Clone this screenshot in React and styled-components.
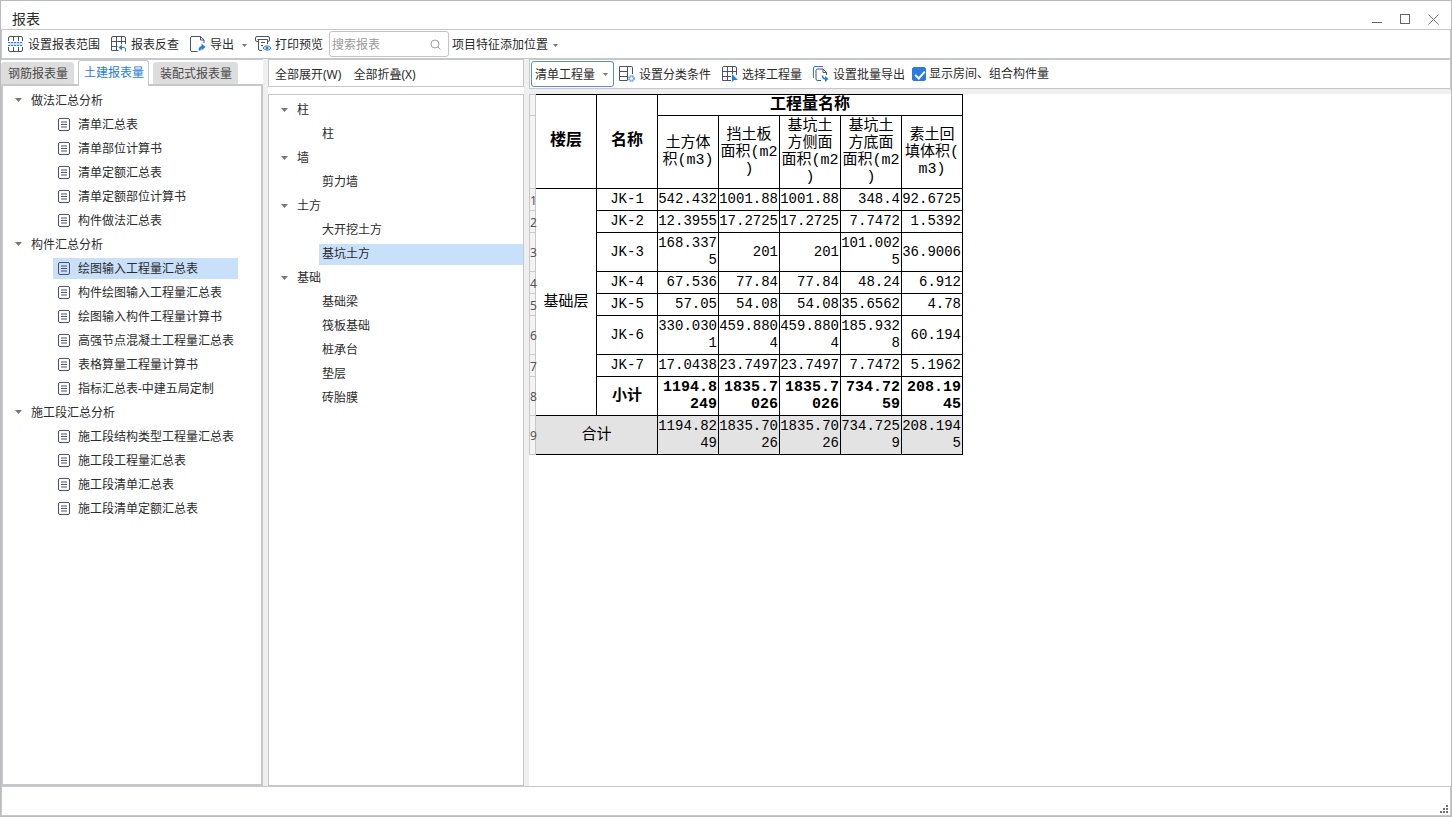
import React from "react";
import styled, { createGlobalStyle, css } from "styled-components";

const line = "#c5c7cb";
const ink = "#2b2b2b";
const ui = '"Noto Sans", "Noto Sans CJK SC", sans-serif';
const mono = '"Liberation Mono", "Noto Sans CJK SC", monospace';

const GlobalStyle = createGlobalStyle`
  * { box-sizing: border-box; }
  body { margin: 0; background: #fff; color: ${ink}; font: 12px/18px ${ui}; }
  button, input, select { font: inherit; color: inherit; margin: 0; }
  ul { list-style: none; margin: 0; padding: 0; }
  svg { display: block; flex: none; }
`;

const Window = styled.div`
  display: flex;
  flex-direction: column;
  min-height: 100vh;
  border: 1px solid #bbbbbb;
`;

const TitleBar = styled.header`
  display: flex;
  align-items: center;
  justify-content: space-between;
  height: 28px;
  padding: 8px 4px 0 11px;
`;

const Title = styled.h1`
  margin: 0;
  font-size: 14px;
  font-weight: 400;
  line-height: 20px;
`;

const Controls = styled.div`
  display: flex;
`;

const ControlButton = styled.button`
  display: flex;
  align-items: center;
  justify-content: center;
  width: 28px;
  height: 20px;
  padding: 0;
  border: 0;
  background: none;
`;

const Toolbar = styled.div`
  display: flex;
  align-items: center;
  height: 30px;
  padding: ${(p) => p.$pad || "0"};
  border: 1px solid ${line};
  background: #fff;
`;

const ToolButton = styled.button`
  display: flex;
  align-items: center;
  gap: 4px;
  height: 24px;
  padding: 0;
  margin-right: ${(p) => p.$after || 11}px;
  border: 0;
  background: none;
  white-space: nowrap;
`;

const Caption = styled.span`
  padding-top: 2px;
`;

const CaretSlot = styled.span`
  display: flex;
  margin-left: ${(p) => p.$gap || 0}px;
  padding-top: 2px;
`;

const SearchBox = styled.label`
  display: flex;
  align-items: center;
  width: 120px;
  height: 26px;
  margin-right: 3px;
  padding: 0 7px 0 2px;
  border: 1px solid #c4c4c4;
  border-radius: 3px;
`;

const SearchInput = styled.input`
  flex: 1;
  min-width: 0;
  padding: 1px 0 0;
  border: 0;
  outline: 0;
  background: none;
  &::placeholder { color: #9a9a9a; opacity: 1; }
`;

const Body = styled.main`
  display: flex;
  flex: 1;
  background: #efefef;
`;

const ReportPanel = styled.section`
  display: flex;
  flex-direction: column;
  width: 262px;
  margin-right: 5px;
  border-top: 1px solid ${line};
  background: #fff;
`;

const Tabs = styled.div`
  display: flex;
  align-items: flex-end;
  height: 26px;
  margin-bottom: -2px;
`;

const Tab = styled.button`
  position: relative;
  height: 22px;
  margin: 0 4px 2px 0;
  padding: 2px 6px 0 7px;
  border: 0;
  border-radius: 3px 3px 0 0;
  background: #dddddd;
  color: #4a4a4a;
  &[aria-selected="true"] {
    height: 26px;
    margin-bottom: 0;
    padding: 0 4px 1px 5px;
    border: 1px solid ${line};
    border-bottom: 0;
    background: #fff;
    color: #1f7ce8;
  }
`;

const ReportTree = styled.div`
  flex: 1;
  border: 2px solid ${line};
  padding-top: 2px;
`;

const PartPanel = styled.section`
  display: flex;
  flex-direction: column;
  width: 256px;
  margin-right: 5px;
  background: #fff;
`;

const MenuBar = styled.div`
  display: flex;
  align-items: center;
  gap: 12px;
  height: 28px;
  margin-bottom: 7px;
  padding: 4px 6px 0;
  border: 1px solid ${line};
`;

const MenuButton = styled.button`
  padding: 0;
  border: 0;
  background: none;
`;

const PartTree = styled.div`
  flex: 1;
  border: 1px solid ${line};
  padding-top: 3px;
`;

const GroupRow = styled.button`
  display: flex;
  align-items: center;
  gap: 9px;
  width: 100%;
  height: 24px;
  padding: 0 0 0 12px;
  border: 0;
  background: none;
`;

const LeafRow = styled.li`
  display: flex;
  align-items: center;
  height: 24px;
  padding: 0 ${(p) => p.$right}px 0 50px;
`;

const LeafButton = styled.button`
  display: flex;
  align-items: center;
  flex: 1;
  gap: 8px;
  height: 21px;
  padding: 0 0 0 ${(p) => p.$inset}px;
  border: 0;
  background: ${(p) => (p.$selected ? "#c9e0fa" : "none")};
  white-space: nowrap;
`;

const TreeText = styled.span`
  padding-top: ${(p) => p.$drop}px;
`;

const GridPanel = styled.section`
  display: flex;
  flex-direction: column;
  flex: 1;
  min-width: 0;
`;

const SelectWrap = styled.div`
  display: flex;
  align-items: center;
  position: relative;
  margin-right: 5px;
`;

const Select = styled.select`
  appearance: none;
  width: 83px;
  height: 26px;
  padding: 2px 3px 0;
  border: 1px solid #5b8bd9;
  border-radius: 3px;
  background: #fff;
`;

const SelectCaret = styled.span`
  position: absolute;
  right: 6px;
  pointer-events: none;
`;

const CheckLabel = styled.label`
  display: flex;
  align-items: center;
  gap: 3px;
  padding-bottom: 1px;
  white-space: nowrap;
`;

const Checkbox = styled.input`
  appearance: none;
  position: relative;
  width: 14px;
  height: 14px;
  border: 1px solid #2a7ce0;
  border-radius: 2px;
  &:checked { background: #2a7ce0; }
  &:checked::after {
    content: "";
    position: absolute;
    left: 4px;
    top: 1px;
    width: 4px;
    height: 8px;
    border: solid #fff;
    border-width: 0 2px 2px 0;
    transform: rotate(42deg);
  }
`;

const Sheet = styled.div`
  flex: 1;
  margin-top: 5px;
  background: #fff;
`;

const Table = styled.table`
  table-layout: fixed;
  width: 434px;
  border-collapse: separate;
  border-spacing: 0;
  color: #000;
  font-family: ${mono};
`;

const edge = css`
  border: solid #000;
  border-width: 0 1px 1px 0;
`;

const HeadCell = styled.th`
  ${edge}
  ${(p) => p.$top && "border-top-width: 1px;"}
  height: ${(p) => p.$h}px;
  padding: 0 1px;
  font-size: ${(p) => (p.$top ? 16 : 15)}px;
  font-weight: ${(p) => (p.$top ? 700 : 400)};
  line-height: 17px;
  word-break: break-all;
  line-break: anywhere;
`;

const NumberCell = styled.th`
  border: solid #c8c8c8;
  border-width: ${(p) => (p.$top ? "1px 1px 1px 1px" : "0 1px 1px 1px")};
  padding: 2px 0 0;
  background: #f3f3f3;
  color: #555;
  font: 12px/14px ${ui};
  text-align: left;
`;

const Cell = styled.td`
  ${edge}
  height: ${(p) => p.$h}px;
  padding: 0 ${(p) => (p.$center ? 0 : 1)}px 0 0;
  background: ${(p) => (p.$total ? "#e3e3e3" : "#fff")};
  font-size: ${(p) => (p.$bold || p.$label ? 15 : 14)}px;
  font-weight: ${(p) => (p.$bold ? 700 : 400)};
  line-height: 17px;
  text-align: ${(p) => (p.$center ? "center" : "right")};
  word-break: break-all;
  line-break: anywhere;
`;

const StatusBar = styled.footer`
  display: flex;
  align-items: flex-end;
  justify-content: flex-end;
  height: 30px;
  padding: 2px;
  border: 1px solid ${line};
  background: #fff;
`;

const stroke = "#4b5268";
const blue = "#1f7ce8";

const Icon = ({ children, size = 16 }) => (
  <svg width={size} height={size} viewBox={`0 0 ${size} ${size}`} fill="none" stroke={stroke} aria-hidden="true">
    {children}
  </svg>
);

const Caret = ({ large }) =>
  large ? (
    <svg width="7" height="4" viewBox="0 0 7 4" aria-hidden="true"><path d="M0 0h7L3.5 4z" fill="#777" /></svg>
  ) : (
    <svg width="5" height="3" viewBox="0 0 5 3" aria-hidden="true"><path d="M0 0h5L2.5 3z" fill="#777" /></svg>
  );

const RangeIcon = () => (
  <Icon>
    <rect x="1" y="6" width="14" height="4" fill="#cfe5fd" stroke="none" />
    <path d="M.5 5V2Q.5.5 2 .5h11q1.500 0 1.500 1.500v3M.5 11v3q0 1.500 1.500 1.500h11q1.500 0 1.500-1.500v-3M5.500.5V5M10.500.5V5M5.500 11v4.500M10.500 11v4.500" />
    <path d="M0 6.500h15M0 9.500h15" stroke={blue} strokeDasharray="2 1" />
  </Icon>
);

const ReverseIcon = () => (
  <Icon>
    <path d="M7.500 14.500H.5V2Q.5.5 2 .5h11q1.500 0 1.500 1.500v6M.5 5.500h14M.5 10.500h6M5.500.5v14M10.500.5V8" />
    <path d="M9 11.500h4q1.500 0 1.500 1.500v2.500" stroke={blue} />
    <path d="M7.500 11.500l3.500-3v6z" fill={blue} stroke="none" />
  </Icon>
);

const ExportIcon = () => (
  <Icon>
    <path d="M7.500 15.500H2Q.5 15.500.5 14V2Q.5.5 2 .5h8.500l3.500 3.500V7M10.500 .5V4h3.500" />
    <path d="M9.500 14.500q0-3.500 3-3.500" stroke={blue} strokeWidth="2" />
    <path d="M11.500 7.500l4 3.500-4 3.500z" fill={blue} stroke="none" />
  </Icon>
);

const PrintIcon = () => (
  <Icon>
    <path d="M3 5.500H2Q.5 5.500.5 4V2Q.5.500 2 .5h11q1.500 0 1.500 1.500v2q0 1.500-1.500 1.500M2.500 3.500h10M3.500 3.500V13q0 1.500 1.500 1.500h2M12.500 3.500V8M6 6.500h4M6 9.500h2" />
    <path d="M8 12Q12 7.500 16 12 12 16.500 8 12z" stroke={blue} fill="#fff" />
    <circle cx="12" cy="12" r="1.500" fill={blue} stroke="none" />
  </Icon>
);

const SearchIcon = () => (
  <Icon size={11}>
    <circle cx="5" cy="5" r="4" stroke="#a0a0a0" />
    <path d="M8 8l2.500 2.500" stroke="#a0a0a0" />
  </Icon>
);

const DocIcon = () => (
  <svg width="12" height="13" viewBox="0 0 12 13" fill="none" stroke={stroke} aria-hidden="true">
    <rect x=".5" y=".5" width="11" height="12" rx="1.500" />
    <path d="M3 4h6M3 6.500h6M3 9h6" />
  </svg>
);

const ClassifyIcon = () => (
  <Icon>
    <path d="M8 14.500H.5V.5h12q1 0 1 1V8M8.500.5v14M.5 5.500h8M.5 10.500h8" />
    <circle cx="12.500" cy="12.500" r="2.500" stroke="#6ea8ef" strokeWidth="2" strokeDasharray="1.500 .5" fill="#d6e8fc" />
    <circle cx="12.500" cy="12.500" r="1" fill="#fff" stroke="none" />
  </Icon>
);

const ChooseIcon = () => (
  <Icon>
    <path d="M9 14.500H.5V2Q.5.5 2 .5h11q1.500 0 1.500 1.500v7M.5 5.500h14M.5 10.500H9M5.500.5v14M10.500.5V8" />
    <path d="M10 8v8l2-2h4z" fill={blue} stroke="none" />
  </Icon>
);

const BatchIcon = () => (
  <Icon>
    <path d="M.5 12V2Q.5.5 2 .5h8" stroke={blue} />
    <path d="M8 14.500H4.500Q3 14.500 3 13V4.500Q3 3 4.500 3h5.500l3.500 3.500V9M10 3v3.500h3.500" />
    <path d="M9.500 9.500q0 3.500 3.500 3.500" stroke={blue} strokeWidth="1.500" />
    <path d="M12 10l3.500 3-3.500 3z" fill={blue} stroke="none" />
  </Icon>
);

const Grip = () => (
  <svg width="8" height="8" viewBox="0 0 8 8" fill="#707070" aria-hidden="true">
    <path d="M6 0h2v2H6zM3 3h2v2H3zM6 3h2v2H6zM0 6h2v2H0zM3 6h2v2H3zM6 6h2v2H6z" />
  </svg>
);

const reports = [
  ["做法汇总分析", ["清单汇总表", "清单部位计算书", "清单定额汇总表", "清单定额部位计算书", "构件做法汇总表"]],
  ["构件汇总分析", ["绘图输入工程量汇总表", "构件绘图输入工程量汇总表", "绘图输入构件工程量计算书", "高强节点混凝土工程量汇总表", "表格算量工程量计算书", "指标汇总表-中建五局定制"]],
  ["施工段汇总分析", ["施工段结构类型工程量汇总表", "施工段工程量汇总表", "施工段清单汇总表", "施工段清单定额汇总表"]],
];

const parts = [
  ["柱", ["柱"]],
  ["墙", ["剪力墙"]],
  ["土方", ["大开挖土方", "基坑土方"]],
  ["基础", ["基础梁", "筏板基础", "桩承台", "垫层", "砖胎膜"]],
];

const quantities = ["土方体积(m3)", "挡土板面积(m2)", "基坑土方侧面面积(m2)", "基坑土方底面面积(m2)", "素土回填体积(m3)"];

const rows = [
  ["JK-1", 22, ["542.432", "1001.88", "1001.88", "348.4", "92.6725"]],
  ["JK-2", 22, ["12.3955", "17.2725", "17.2725", "7.7472", "1.5392"]],
  ["JK-3", 39, ["168.3375", "201", "201", "101.0025", "36.9006"]],
  ["JK-4", 22, ["67.536", "77.84", "77.84", "48.24", "6.912"]],
  ["JK-5", 22, ["57.05", "54.08", "54.08", "35.6562", "4.78"]],
  ["JK-6", 39, ["330.0301", "459.8804", "459.8804", "185.9328", "60.194"]],
  ["JK-7", 22, ["17.0438", "23.7497", "23.7497", "7.7472", "5.1962"]],
  ["小计", 39, ["1194.8249", "1835.7026", "1835.7026", "734.7259", "208.1945"]],
];

const totals = ["1194.8249", "1835.7026", "1835.7026", "734.7259", "208.1945"];

function Tree({ groups, selected, icon, inset, right, drop }) {
  return (
    <ul>
      {groups.map(([name, items]) => (
        <li key={name}>
          <GroupRow type="button"><Caret large /><TreeText $drop={drop}>{name}</TreeText></GroupRow>
          <ul>
            {items.map((item) => (
              <LeafRow key={item} $right={right}>
                <LeafButton type="button" $inset={inset} $selected={item === selected}>
                  {icon}<TreeText $drop={drop}>{item}</TreeText>
                </LeafButton>
              </LeafRow>
            ))}
          </ul>
        </li>
      ))}
    </ul>
  );
}

function QuantityTable() {
  return (
    <Table>
      <colgroup>
        <col style={{ width: 7 }} />
        {Array.from({ length: 7 }, (_, i) => <col key={i} />)}
      </colgroup>
      <thead>
        <tr>
          <NumberCell $top aria-hidden="true" />
          <HeadCell $top rowSpan={2} scope="col">楼层</HeadCell>
          <HeadCell $top rowSpan={2} scope="col">名称</HeadCell>
          <HeadCell $top $h={22} colSpan={5} scope="colgroup">工程量名称</HeadCell>
        </tr>
        <tr>
          <NumberCell aria-hidden="true" />
          {quantities.map((q) => <HeadCell key={q} $h={73} scope="col">{q}</HeadCell>)}
        </tr>
      </thead>
      <tbody>
        {rows.map(([name, h, values], i) => {
          const bold = name === "小计";
          return (
            <tr key={name}>
              <NumberCell scope="row">{i + 1}</NumberCell>
              {i === 0 && <Cell $center $label rowSpan={8}>基础层</Cell>}
              <Cell $center $bold={bold} $h={h}>{name}</Cell>
              {values.map((v, j) => <Cell key={j} $bold={bold} $h={h}>{v}</Cell>)}
            </tr>
          );
        })}
        <tr>
          <NumberCell scope="row">9</NumberCell>
          <Cell $center $label $total $h={39} colSpan={2}>合计</Cell>
          {totals.map((v, j) => <Cell key={j} $total $h={39}>{v}</Cell>)}
        </tr>
      </tbody>
    </Table>
  );
}

export default function App() {
  return (
    <Window>
      <GlobalStyle />
      <TitleBar>
        <Title>报表</Title>
        <Controls>
          <ControlButton type="button" aria-label="最小化">
            <svg width="10" height="10" stroke="#666"><path d="M0 8.500h10" /></svg>
          </ControlButton>
          <ControlButton type="button" aria-label="最大化">
            <svg width="10" height="10" stroke="#666" fill="none"><rect x=".5" y=".5" width="9" height="9" /></svg>
          </ControlButton>
          <ControlButton type="button" aria-label="关闭">
            <svg width="11" height="11" stroke="#777"><path d="M.5.5l10 10M10.500.5l-10 10" /></svg>
          </ControlButton>
        </Controls>
      </TitleBar>

      <Toolbar $pad="0 6px">
        <ToolButton type="button"><RangeIcon /><Caption>设置报表范围</Caption></ToolButton>
        <ToolButton type="button"><ReverseIcon /><Caption>报表反查</Caption></ToolButton>
        <ToolButton type="button" $after={8}><ExportIcon /><Caption>导出</Caption><CaretSlot $gap={4}><Caret /></CaretSlot></ToolButton>
        <ToolButton type="button" $after={6}><PrintIcon /><Caption>打印预览</Caption></ToolButton>
        <SearchBox>
          <SearchInput type="text" placeholder="搜索报表" aria-label="搜索报表" />
          <SearchIcon />
        </SearchBox>
        <ToolButton type="button"><Caption>项目特征添加位置</Caption><CaretSlot $gap={1}><Caret /></CaretSlot></ToolButton>
      </Toolbar>

      <Body>
        <ReportPanel>
          <Tabs role="tablist">
            <Tab type="button" role="tab" aria-selected="false">钢筋报表量</Tab>
            <Tab type="button" role="tab" aria-selected="true">土建报表量</Tab>
            <Tab type="button" role="tab" aria-selected="false">装配式报表量</Tab>
          </Tabs>
          <ReportTree>
            <Tree groups={reports} selected="绘图输入工程量汇总表" icon={<DocIcon />} inset={5} right={23} drop={2} />
          </ReportTree>
        </ReportPanel>

        <PartPanel>
          <MenuBar>
            <MenuButton type="button">全部展开(W)</MenuButton>
            <MenuButton type="button">全部折叠(X)</MenuButton>
          </MenuBar>
          <PartTree>
            <Tree groups={parts} selected="基坑土方" inset={3} right={0} drop={0} />
          </PartTree>
        </PartPanel>

        <GridPanel>
          <Toolbar $pad="0 1px">
            <SelectWrap>
              <Select aria-label="工程量类型" defaultValue="清单工程量">
                <option>清单工程量</option>
              </Select>
              <SelectCaret><Caret /></SelectCaret>
            </SelectWrap>
            <ToolButton type="button"><ClassifyIcon /><Caption>设置分类条件</Caption></ToolButton>
            <ToolButton type="button"><ChooseIcon /><Caption>选择工程量</Caption></ToolButton>
            <ToolButton type="button" $after={7}><BatchIcon /><Caption>设置批量导出</Caption></ToolButton>
            <CheckLabel>
              <Checkbox type="checkbox" defaultChecked />显示房间、组合构件量
            </CheckLabel>
          </Toolbar>
          <Sheet>
            <QuantityTable />
          </Sheet>
        </GridPanel>
      </Body>

      <StatusBar><Grip /></StatusBar>
    </Window>
  );
}
